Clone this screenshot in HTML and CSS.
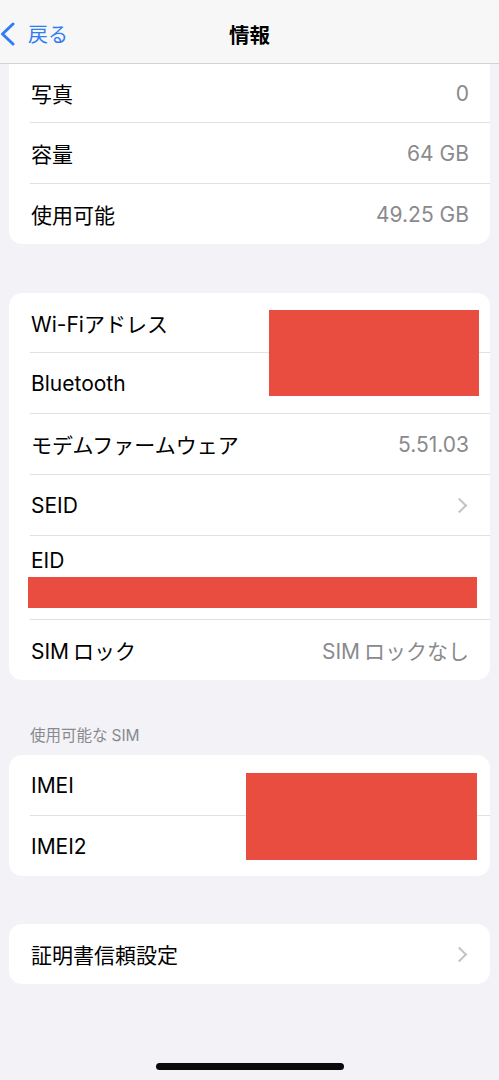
FILE: index.html
```html
<!DOCTYPE html>
<html lang="ja">
<head>
  <meta charset="UTF-8">
  <title>情報</title>
  <link rel="stylesheet" href="styles.css">
</head>
<body>

  <header class="navbar">
    <a class="back" href="#">
      <svg class="back-icon" width="16" height="24" viewBox="0 0 16 24">
        <polyline points="13,2 2.5,12 13,22" fill="none" stroke="#2f7cf6" stroke-width="3" stroke-linecap="round" stroke-linejoin="round"/>
      </svg>
      <span>戻る</span>
    </a>
    <h1 class="title">情報</h1>
    <div></div>
  </header>

  <section class="card card-top">
    <div class="row row-first"><span class="label">写真</span><span class="value">0</span></div>
    <div class="row"><span class="label">容量</span><span class="value">64 GB</span></div>
    <div class="row"><span class="label">使用可能</span><span class="value">49.25 GB</span></div>
  </section>

  <section class="card card-net">
    <div class="row row-first"><span class="label">Wi-Fiアドレス</span></div>
    <div class="row"><span class="label">Bluetooth</span></div>
    <div class="row"><span class="label">モデムファームウェア</span><span class="value">5.51.03</span></div>
    <div class="row"><span class="label">SEID</span><span class="chevron"></span></div>
    <div class="row row-eid">
      <span class="label">EID</span>
      <div class="redact redact-eid"></div>
    </div>
    <div class="row"><span class="label">SIM<span class="gap">ロック</span></span><span class="value">SIM<span class="gap">ロックなし</span></span></div>
    <div class="redact redact-net"></div>
  </section>

  <p class="section-title">使用可能な<span class="gap">SIM</span></p>

  <section class="card card-sim">
    <div class="row row-first"><span class="label">IMEI</span></div>
    <div class="row"><span class="label">IMEI2</span></div>
    <div class="redact redact-sim"></div>
  </section>

  <section class="card card-cert">
    <div class="row row-first"><span class="label">証明書信頼設定</span><span class="chevron"></span></div>
  </section>

  <div class="home-bar"></div>

</body>
</html>
```

FILE: styles.css
```css
body {
  margin: 0;
  width: 499px;
  min-height: 1080px;
  background-color: #f2f2f7;
  font-family: 'Inter', 'Noto Sans CJK JP', sans-serif;
  color: #000;
}
.navbar {
  display: grid;
  grid-template-columns: 1fr auto 1fr;
  align-items: center;
  height: 63px;
  background-color: #f7f7f7;
  border-bottom: 1px solid #d2d2d4;
}
.back {
  display: flex;
  align-items: center;
  gap: 12px;
  color: #2f7cf6;
  text-decoration: none;
  font-size: 20px;
  padding-top: 4px;
}
.back-icon {
  display: block;
}
.title {
  margin: 0;
  font-size: 20.5px;
  font-weight: 700;
  padding-top: 4px;
}
.card {
  position: relative;
  margin: 0 9px;
  background: #fff;
  border-radius: 13px;
  overflow: hidden;
}
.card-top {
  border-radius: 0 0 13px 13px;
}
.card-net {
  margin-top: 49px;
}
.card-cert {
  margin-top: 48px;
}
.row {
  display: flex;
  align-items: center;
  justify-content: space-between;
  height: 60px;
  margin-left: 21px;
  padding-right: 21px;
  border-top: 1px solid #e1e1e4;
  font-size: 21px;
}
.row-first {
  border-top: none;
}
.card-top .row-first {
  height: 58px;
}
.card-net .row-first {
  height: 59px;
}
.label {
  padding-left: 1px;
}
.value {
  color: #8a8a8e;
}
.gap {
  margin-left: 4px;
}
.chevron {
  width: 9px;
  height: 9px;
  border-top: 2px solid #c4c4c7;
  border-right: 2px solid #c4c4c7;
  transform: rotate(45deg);
  margin-right: 4px;
}
.row-eid {
  display: block;
  height: 84px;
  padding-top: 12px;
  box-sizing: border-box;
}
.row-eid .label {
  display: block;
  line-height: 25px;
}
.redact {
  background-color: #e84d3f;
}
.redact-eid {
  margin-left: -2px;
  margin-top: 4px;
  width: 449px;
  height: 31px;
}
.redact-net {
  position: absolute;
  left: 260px;
  top: 17px;
  width: 210px;
  height: 86px;
}
.redact-sim {
  position: absolute;
  left: 237px;
  top: 18px;
  width: 231px;
  height: 87px;
}
.section-title {
  margin: 0;
  padding: 47px 0 10px 30px;
  font-size: 15.5px;
  color: #8a8a8e;
  line-height: 18px;
}
.home-bar {
  width: 188px;
  height: 7px;
  margin: 79px auto 0;
  background: #0a0a0a;
  border-radius: 4px;
}
```
